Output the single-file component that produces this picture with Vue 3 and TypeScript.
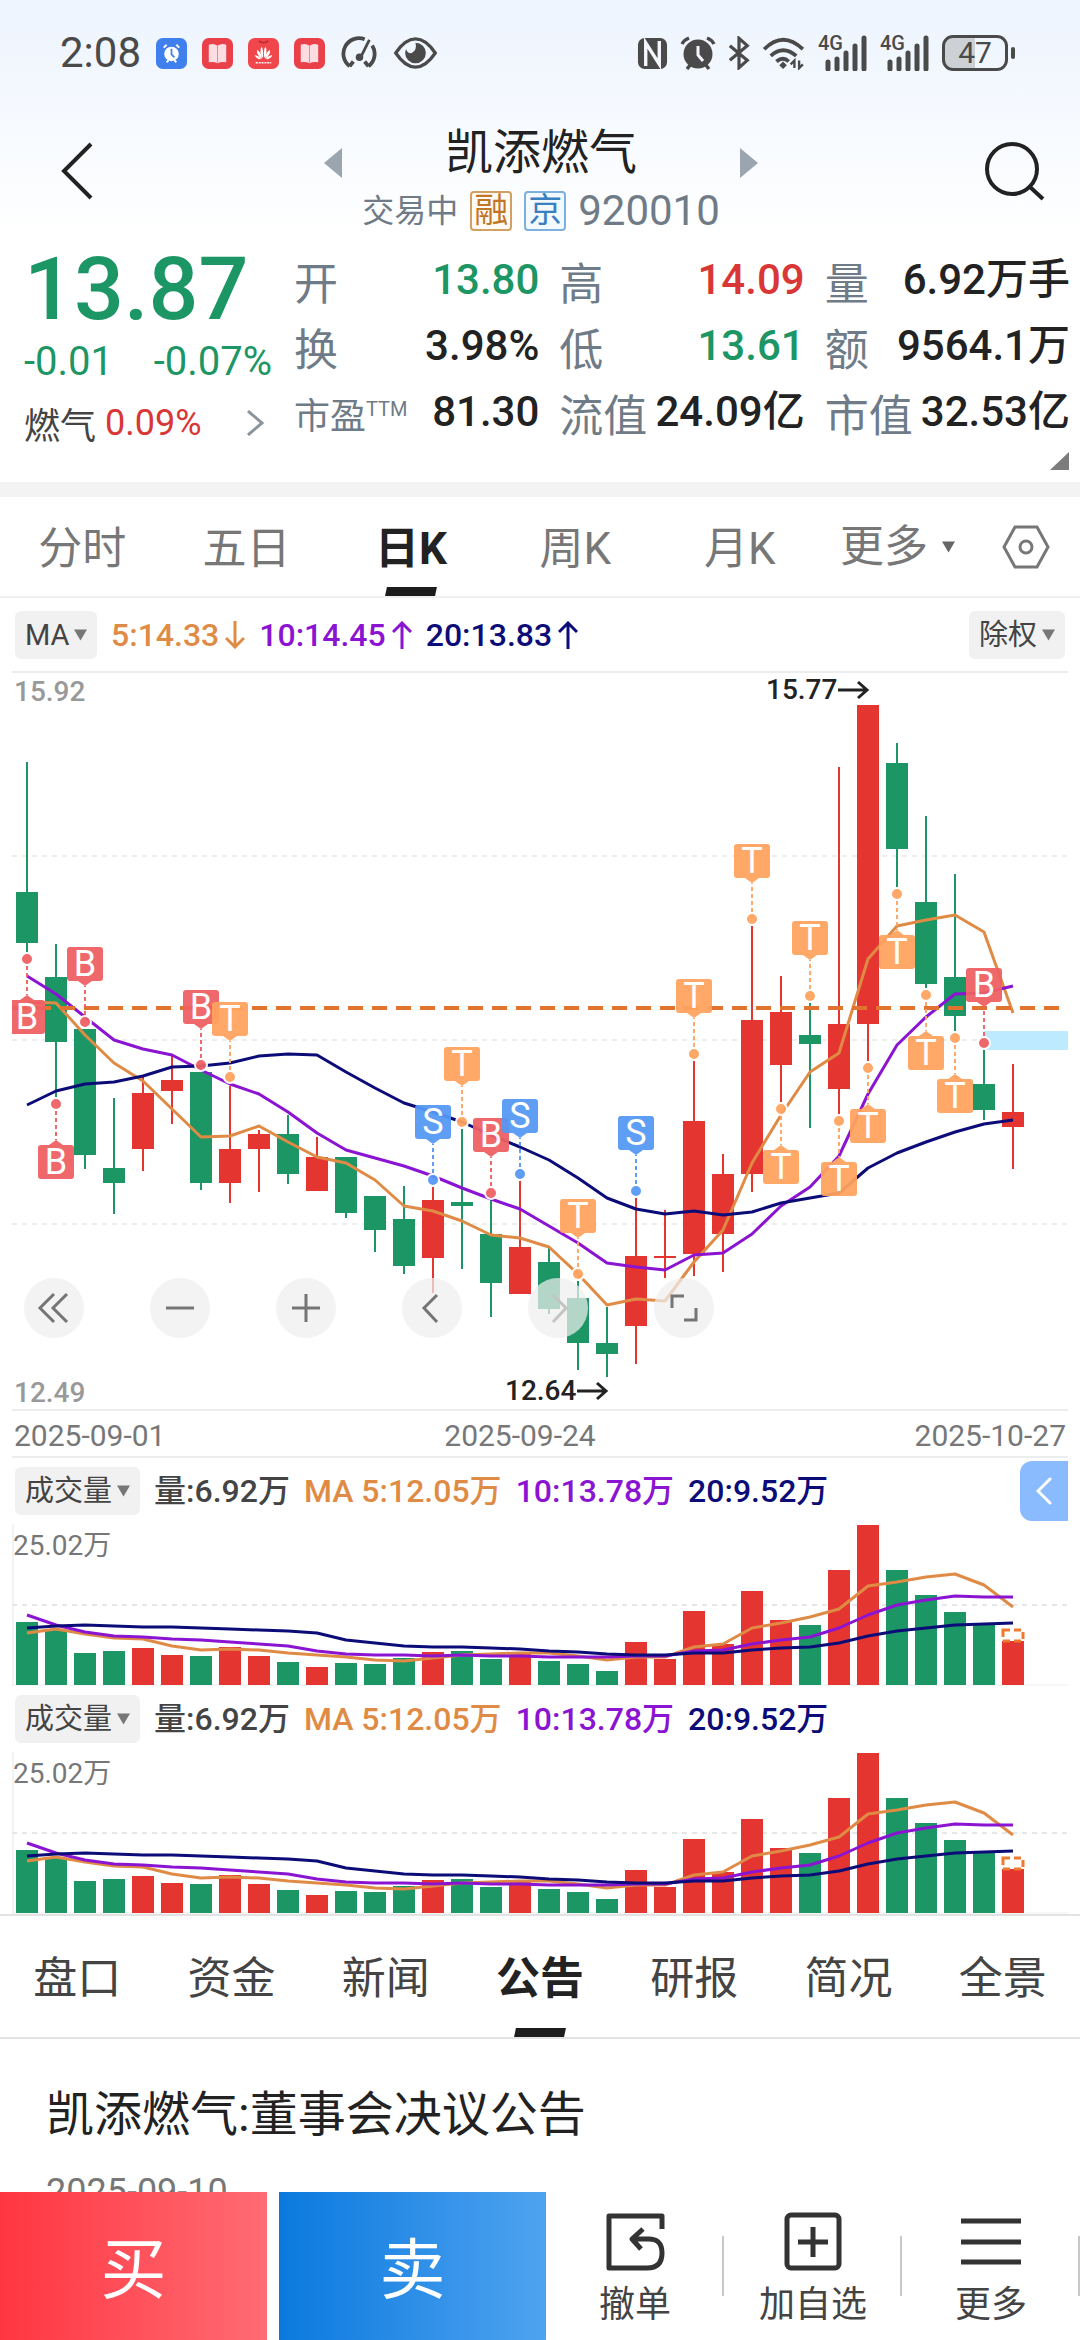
<script setup lang="ts">
import { computed, ref } from 'vue'

type Tone = 'up' | 'down' | 'plain'
type Candle = [tone: 'r' | 'g', high: number, top: number, bottom: number, low: number]
type Mark = [index: number, kind: 'B' | 'S' | 'T', side: 'above' | 'below', dot: number]

interface Stat {
  label: string
  value: string
  tone: Tone
  sup?: string
}

const stats: Stat[] = [
  { label: '开', value: '13.80', tone: 'down' },
  { label: '高', value: '14.09', tone: 'up' },
  { label: '量', value: '6.92万手', tone: 'plain' },
  { label: '换', value: '3.98%', tone: 'plain' },
  { label: '低', value: '13.61', tone: 'down' },
  { label: '额', value: '9564.1万', tone: 'plain' },
  { label: '市盈', value: '81.30', tone: 'plain', sup: 'TTM' },
  { label: '流值', value: '24.09亿', tone: 'plain' },
  { label: '市值', value: '32.53亿', tone: 'plain' },
]

const periods = ['分时', '五日', '日K', '周K', '月K']
const period = ref('日K')
const sections = ['盘口', '资金', '新闻', '公告', '研报', '简况', '全景']
const section = ref('公告')

// Candle geometry on the chart canvas, one entry per trading day.
const candles: Candle[] = [
  ['g', 762, 892, 943, 952],
  ['g', 944, 977, 1042, 1097],
  ['g', 1029, 1029, 1155, 1169],
  ['g', 1098, 1168, 1183, 1214],
  ['r', 1077, 1093, 1149, 1171],
  ['r', 1055, 1080, 1091, 1124],
  ['g', 1072, 1072, 1183, 1190],
  ['r', 1086, 1149, 1183, 1203],
  ['r', 1130, 1134, 1149, 1192],
  ['g', 1115, 1134, 1174, 1184],
  ['r', 1137, 1157, 1191, 1191],
  ['g', 1157, 1157, 1213, 1218],
  ['g', 1196, 1196, 1230, 1252],
  ['g', 1186, 1219, 1266, 1274],
  ['r', 1187, 1200, 1258, 1293],
  ['g', 1129, 1202, 1206, 1269],
  ['g', 1200, 1234, 1283, 1317],
  ['r', 1181, 1247, 1294, 1294],
  ['g', 1248, 1262, 1309, 1314],
  ['g', 1281, 1298, 1343, 1370],
  ['g', 1307, 1343, 1354, 1377],
  ['r', 1198, 1256, 1326, 1364],
  ['r', 1210, 1256, 1258, 1278],
  ['r', 1061, 1121, 1254, 1276],
  ['r', 1154, 1174, 1234, 1272],
  ['r', 926, 1020, 1174, 1192],
  ['r', 976, 1012, 1065, 1102],
  ['g', 1003, 1035, 1044, 1128],
  ['r', 767, 1024, 1089, 1114],
  ['r', 705, 705, 1024, 1061],
  ['g', 743, 763, 849, 887],
  ['g', 816, 902, 984, 988],
  ['g', 874, 977, 1016, 1031],
  ['g', 1050, 1084, 1110, 1120],
  ['r', 1064, 1112, 1127, 1169],
]

const marks: Mark[] = [
  [0, 'B', 'below', 959],
  [1, 'B', 'below', 1104],
  [2, 'B', 'above', 1022],
  [6, 'B', 'above', 1065],
  [7, 'T', 'above', 1077],
  [14, 'S', 'above', 1180],
  [15, 'T', 'above', 1122],
  [16, 'B', 'above', 1193],
  [17, 'S', 'above', 1174],
  [19, 'T', 'above', 1274],
  [21, 'S', 'above', 1191],
  [23, 'T', 'above', 1054],
  [25, 'T', 'above', 919],
  [26, 'T', 'below', 1109],
  [27, 'T', 'above', 996],
  [28, 'T', 'below', 1121],
  [29, 'T', 'below', 1068],
  [30, 'T', 'below', 894],
  [31, 'T', 'below', 995],
  [32, 'T', 'below', 1038],
  [33, 'B', 'above', 1043],
]

const priceAverages = [
  { cls: 'ma5', ys: [1002, 1003, 1035, 1063, 1081, 1109, 1137, 1136, 1126, 1142, 1157, 1163, 1180, 1206, 1211, 1221, 1235, 1238, 1247, 1274, 1305, 1299, 1301, 1262, 1230, 1163, 1115, 1072, 1053, 959, 926, 920, 915, 932, 1013] },
  { cls: 'ma10', ys: [976, 994, 1017, 1040, 1049, 1055, 1070, 1084, 1094, 1112, 1133, 1150, 1158, 1166, 1176, 1188, 1199, 1209, 1226, 1243, 1263, 1267, 1270, 1255, 1253, 1234, 1206, 1187, 1156, 1094, 1045, 1017, 994, 993, 986] },
  { cls: 'ma20', ys: [1105, 1091, 1084, 1082, 1076, 1067, 1066, 1063, 1056, 1054, 1055, 1072, 1088, 1103, 1112, 1122, 1135, 1147, 1160, 1178, 1198, 1209, 1214, 1211, 1215, 1212, 1203, 1198, 1193, 1168, 1153, 1142, 1132, 1124, 1120] },
]

const volumeTops = [1622, 1630, 1653, 1651, 1648, 1655, 1656, 1647, 1656, 1662, 1667, 1663, 1664, 1658, 1652, 1651, 1659, 1654, 1661, 1664, 1671, 1642, 1659, 1611, 1644, 1591, 1620, 1625, 1570, 1525, 1570, 1595, 1612, 1625, 1641]

const volumeAverages = [
  { cls: 'ma5', ys: [1633, 1629, 1634, 1638, 1639, 1646, 1650, 1649, 1650, 1653, 1655, 1657, 1660, 1661, 1658, 1655, 1654, 1653, 1653, 1656, 1660, 1657, 1657, 1647, 1644, 1628, 1623, 1617, 1609, 1586, 1582, 1577, 1574, 1585, 1607] },
  { cls: 'ma10', ys: [1615, 1625, 1632, 1636, 1637, 1639, 1640, 1642, 1644, 1646, 1651, 1654, 1655, 1655, 1656, 1655, 1656, 1656, 1657, 1657, 1657, 1656, 1656, 1651, 1650, 1644, 1640, 1637, 1628, 1615, 1605, 1600, 1596, 1597, 1597] },
  { cls: 'ma20', ys: [1628, 1626, 1625, 1626, 1627, 1627, 1628, 1629, 1630, 1631, 1633, 1640, 1643, 1646, 1647, 1647, 1648, 1649, 1651, 1652, 1654, 1655, 1655, 1653, 1653, 1650, 1648, 1647, 1643, 1636, 1631, 1628, 1625, 1624, 1623] },
]

const cx = (i: number): number => 27 + 29 * i
const toPoints = (ys: number[]): string => ys.map((y, i) => `${cx(i)},${y}`).join(' ')

const flags = computed(() =>
  marks.map(([i, kind, side, dot]) => {
    const x = cx(i)
    const above = side === 'above'
    const top = above ? dot - 75 : dot + 41
    const edge = above ? dot - 41 : dot + 41
    const tip = above ? dot - 36 : dot + 36
    return {
      key: `${i}${kind}`,
      kind,
      x,
      dot,
      top,
      tip,
      stem: above ? dot - 7 : dot + 7,
      pointer: `${x - 7},${edge} ${x + 7},${edge} ${x},${tip}`,
    }
  }),
)

const volumePanels = ['volume-a', 'volume-b']
</script>

<template>
  <div class="app">
    <header class="top">
      <div class="status">
        <div class="status-group">
          <span class="clock">2:08</span>
          <svg class="app-icon" viewBox="0 0 32 32">
            <rect width="32" height="32" rx="7" fill="#3f7fee" />
            <circle cx="16" cy="16.500" r="7.500" fill="#fff" />
            <path d="M8 10l3-3M24 10l-3-3M11 25l2-2M21 25l-2-2" stroke="#fff" stroke-width="2" />
            <path d="M16 11v6l3 3" stroke="#3f7fee" stroke-width="1.800" fill="none" />
          </svg>
          <svg class="app-icon" viewBox="0 0 32 32">
            <rect width="32" height="32" rx="7" fill="#e9404a" />
            <path d="M7 7q5-2 9 1q4-3 9-1v18q-5-1-9 1q-4-2-9-1z" fill="#fbdde2" />
            <path d="M16 8v18" stroke="#ee8790" stroke-width="1" />
          </svg>
          <svg class="app-icon" viewBox="0 0 32 32">
            <rect width="32" height="32" rx="7" fill="#f0474c" />
            <path d="M11 3q5 4 10 0" stroke="#b92a30" stroke-width="1.500" fill="none" />
            <path d="M15.500 21Q11 14 14 9q2 2 1.500 12M16.500 21q-.5-10 1.500-12q3 5-1.500 12M14.500 21.500Q8 17 9.500 12q5 4 5 9.500M17.500 21.500q0-5.500 5-9.500q1.500 5-5 9.500M13.500 22Q8 21.500 7 17.500q5 1 6.500 4.500M18.500 22q1.500-3.500 6.500-4.500q-1 4-6.500 4.500" fill="#fff" />
            <path d="M8 25.500h16" stroke="#fff" stroke-width="1.500" stroke-dasharray="2 1" />
          </svg>
          <svg class="app-icon" viewBox="0 0 32 32">
            <rect width="32" height="32" rx="7" fill="#e9404a" />
            <path d="M7 7q5-2 9 1q4-3 9-1v18q-5-1-9 1q-4-2-9-1z" fill="#fbdde2" />
            <path d="M16 8v18" stroke="#ee8790" stroke-width="1" />
          </svg>
          <svg class="gauge" viewBox="0 0 40 36">
            <path d="M10 32A16.500 16.500 0 0 1 26 3.500M34 10A16.500 16.500 0 0 1 30 32M10 32l4-5M30 32l-4-5" fill="none" stroke="#4a4a4a" stroke-width="4" />
            <path d="M31 4L22 22" stroke="#4a4a4a" stroke-width="3" />
            <circle cx="20.500" cy="22.500" r="4" fill="#4a4a4a" />
          </svg>
          <svg class="eye" viewBox="0 0 46 34">
            <path d="M2 17Q12 2 23 2t21 15Q34 32 23 32T2 17z" fill="none" stroke="#4a4a4a" stroke-width="3.500" />
            <path d="M23 6a11 11 0 1 1-11 11q0-2 1-4q2 5 6 4q6-3 4-11z" fill="#4a4a4a" />
          </svg>
        </div>
        <div class="status-group status-right">
          <svg class="nfc" viewBox="0 0 32 34">
            <rect x="1" y="1" width="30" height="32" rx="7" fill="#4a4a4a" />
            <path d="M9 30V6l14 22V4" fill="none" stroke="#f4f8fe" stroke-width="3.500" />
          </svg>
          <svg class="alarm" viewBox="0 0 36 36">
            <circle cx="18" cy="19" r="14.500" fill="#4a4a4a" />
            <path d="M2 9q2-4 7-6M34 9q-2-4-7-6M7 34l4-5M29 34l-4-5" stroke="#4a4a4a" stroke-width="3.500" fill="none" />
            <path d="M18 11v9l5 6" fill="none" stroke="#f4f8fe" stroke-width="3" />
          </svg>
          <svg class="bt" viewBox="0 0 24 36">
            <path d="M2 10l19 16-9 8V2l9 8L2 26" fill="none" stroke="#4a4a4a" stroke-width="3.500" />
          </svg>
          <svg class="wifi" viewBox="0 0 46 36">
            <path d="M2 14Q22-6 43 14M9 21q13-12 27 0M15 27q7-6 13 0" fill="none" stroke="#4a4a4a" stroke-width="4" />
            <path d="M22 27l4 4-4 4-4-4z" fill="#4a4a4a" />
            <path d="M34 34v-8l-4 4M39 26v8l4-4" fill="none" stroke="#4a4a4a" stroke-width="2.500" />
          </svg>
          <span v-for="n in 2" :key="n" class="signal">
            <svg viewBox="0 0 50 36">
              <path d="M10 27v7M19 24v10M28 18v16M37 11v23M46 3v31" stroke="#4a4a4a" stroke-width="5" stroke-linecap="round" />
            </svg>
            <span class="net">4G</span>
          </span>
          <span class="battery"><span class="battery-text">47</span></span>
        </div>
      </div>

      <div class="title-bar">
        <button class="icon-btn back" type="button" aria-label="返回">
          <svg viewBox="0 0 34 60"><path d="M31 3L4 30l27 27" fill="none" stroke="#222" stroke-width="4" /></svg>
        </button>
        <div class="title-group">
          <button class="icon-btn arrow" type="button" aria-label="上一只">
            <svg viewBox="0 0 18 30"><path d="M18 0v30L0 15z" fill="#9aa5af" /></svg>
          </button>
          <div class="title-text">
            <h1>凯添燃气</h1>
            <p class="sub">
              <span class="trading">交易中</span>
              <span class="badge badge-margin">融</span>
              <span class="badge badge-bj">京</span>
              <span class="code">920010</span>
            </p>
          </div>
          <button class="icon-btn arrow" type="button" aria-label="下一只">
            <svg viewBox="0 0 18 30"><path d="M0 0v30l18-15z" fill="#9aa5af" /></svg>
          </button>
        </div>
        <button class="icon-btn search" type="button" aria-label="搜索">
          <svg viewBox="0 0 62 60">
            <circle cx="28" cy="28" r="25" fill="none" stroke="#222" stroke-width="4" />
            <path d="M46 46l13 12" stroke="#222" stroke-width="4" />
          </svg>
        </button>
      </div>

      <section class="quote">
        <div class="quote-main">
          <strong class="price">13.87</strong>
          <div class="change"><span>-0.01</span><span>-0.07%</span></div>
          <a class="industry" href="#industry">
            <span>燃气</span><span class="up">0.09%</span>
            <svg viewBox="0 0 18 26"><path d="M2 1l14 12L2 25" fill="none" stroke="#8b949c" stroke-width="3" /></svg>
          </a>
        </div>
        <dl class="stats">
          <div v-for="s in stats" :key="s.label" class="stat">
            <dt :class="{ small: s.sup }">{{ s.label }}<sup v-if="s.sup">{{ s.sup }}</sup></dt>
            <dd :class="s.tone">{{ s.value }}</dd>
          </div>
        </dl>
        <span class="corner"></span>
      </section>
    </header>

    <nav class="periods">
      <button v-for="p in periods" :key="p" type="button" class="tab" :class="{ active: p === period }" @click="period = p">{{ p }}</button>
      <label class="more">
        <select aria-label="更多周期"><option>更多</option></select>
        <svg class="caret" viewBox="0 0 14 12"><path d="M0 0h14L7 12z" fill="#666" /></svg>
      </label>
      <button class="icon-btn gear" type="button" aria-label="设置">
        <svg viewBox="0 0 48 44">
          <path d="M13 2h22l11 20-11 20H13L2 22z" fill="none" stroke="#777" stroke-width="3" />
          <circle cx="24" cy="22" r="6" fill="none" stroke="#777" stroke-width="3" />
        </svg>
      </button>
    </nav>

    <main class="body">
      <div class="legend">
        <label class="pill">
          <select aria-label="主图指标"><option>MA</option></select>
          <svg class="caret" viewBox="0 0 14 12"><path d="M0 0h14L7 12z" fill="#777" /></svg>
        </label>
        <span class="val c5">5:14.33<svg viewBox="0 0 20 28"><path d="M10 0v26M1 17l9 9 9-9" /></svg></span>
        <span class="val c10">10:14.45<svg viewBox="0 0 20 28"><path d="M10 28V2M1 11l9-9 9 9" /></svg></span>
        <span class="val c20">20:13.83<svg viewBox="0 0 20 28"><path d="M10 28V2M1 11l9-9 9 9" /></svg></span>
        <label class="pill pill-end">
          <select aria-label="复权方式"><option>除权</option></select>
          <svg class="caret" viewBox="0 0 14 12"><path d="M0 0h14L7 12z" fill="#777" /></svg>
        </label>
      </div>

      <div class="kline">
        <svg class="canvas" viewBox="12 671 1056 740">
          <path d="M12 672H1068M12 1410H1068" stroke="#eceeee" stroke-width="2" />
          <path d="M12 856H1068M12 1040H1068M12 1224H1068" stroke="#eceeee" stroke-width="2" stroke-dasharray="5 5" />
          <g v-for="(c, i) in candles" :key="i" :class="c[0]">
            <rect :x="cx(i) - 1" :y="c[1]" width="2" :height="c[4] - c[1]" />
            <rect :x="cx(i) - 11" :y="c[2]" width="22" :height="c[3] - c[2]" />
          </g>
          <rect x="984" y="1031" width="84" height="19" fill="#bdeaff" />
          <polyline v-for="m in priceAverages" :key="m.cls" :class="m.cls" :points="toPoints(m.ys)" />
          <path d="M12 1008H1060" stroke="#e0732f" stroke-width="4" stroke-dasharray="15 9" />
          <g v-for="f in flags" :key="f.key" :class="['flag', `flag-${f.kind}`]">
            <path :d="`M${f.x} ${f.stem}V${f.tip}`" stroke-width="2" stroke-dasharray="4 3" />
            <rect :x="f.x - 18" :y="f.top" width="36" height="34" rx="3" />
            <polygon :points="f.pointer" />
            <circle :cx="f.x" :cy="f.dot" r="6" stroke="#fff" stroke-width="2" />
            <text :x="f.x" :y="f.top + 29" text-anchor="middle">{{ f.kind }}</text>
          </g>
          <text class="axis" x="14" y="701">15.92</text>
          <text class="axis" x="14" y="1402">12.49</text>
          <text class="extreme" x="766" y="699">15.77</text>
          <path class="pointer" d="M838 690h28M858 682l9 8-9 8" />
          <text class="extreme" x="505" y="1400">12.64</text>
          <path class="pointer" d="M577 1391h28M597 1383l9 8-9 8" />
        </svg>
        <div class="controls">
          <button type="button" aria-label="最左"><svg viewBox="0 0 60 60"><path d="M30 16L16 30l14 14M43 16L29 30l14 14" /></svg></button>
          <button type="button" aria-label="缩小"><svg viewBox="0 0 60 60"><path d="M16 30h28" /></svg></button>
          <button type="button" aria-label="放大"><svg viewBox="0 0 60 60"><path d="M16 30h28M30 16v28" /></svg></button>
          <button type="button" aria-label="左移"><svg viewBox="0 0 60 60"><path d="M35 17L22 30l13 14" /></svg></button>
          <button type="button" aria-label="右移" disabled><svg viewBox="0 0 60 60"><path d="M25 17l13 13-13 14" /></svg></button>
          <button type="button" aria-label="全屏"><svg viewBox="0 0 60 60"><path d="M18 30V18h12M42 30v12H30" /></svg></button>
        </div>
      </div>

      <div class="dates"><span>2025-09-01</span><span class="mid">2025-09-24</span><span>2025-10-27</span></div>

      <section v-for="(id, n) in volumePanels" :key="id" class="volume">
        <div class="legend volume-legend">
          <label class="pill">
            <select :id="id" aria-label="副图指标"><option>成交量</option></select>
            <svg class="caret" viewBox="0 0 14 12"><path d="M0 0h14L7 12z" fill="#777" /></svg>
          </label>
          <span class="val">量:6.92万</span>
          <span class="val c5">MA 5:12.05万</span>
          <span class="val c10">10:13.78万</span>
          <span class="val c20">20:9.52万</span>
        </div>
        <svg class="canvas" viewBox="12 1524 1056 162">
          <path d="M13 1524V1686" stroke="#e4e6e6" stroke-width="1" />
          <path d="M12 1685H1068" stroke="#eceeee" stroke-width="1" />
          <path d="M12 1605H1068" stroke="#e6e6e6" stroke-width="2" stroke-dasharray="5 5" />
          <rect v-for="(y, i) in volumeTops" :key="i" :class="candles[i][0]" :x="cx(i) - 11" :y="y" width="22" :height="1685 - y" />
          <rect x="1003" y="1630" width="20" height="11" fill="#fff" stroke="#ee7a30" stroke-width="3" stroke-dasharray="7 4" />
          <polyline v-for="m in volumeAverages" :key="m.cls" :class="m.cls" :points="toPoints(m.ys)" />
          <text class="axis-light" x="13" y="1555">25.02万</text>
        </svg>
        <button v-if="n === 0" class="drawer" type="button" aria-label="展开">
          <svg viewBox="0 0 16 28"><path d="M14 2L2 14l12 12" fill="none" stroke="#fff" stroke-width="3" stroke-linecap="round" /></svg>
        </button>
      </section>

      <nav class="sections">
        <button v-for="s in sections" :key="s" type="button" class="tab" :class="{ active: s === section }" @click="section = s">{{ s }}</button>
      </nav>

      <article class="news">
        <a href="#notice">凯添燃气:董事会决议公告</a>
        <time datetime="2025-09-10">2025-09-10</time>
      </article>
    </main>

    <footer class="trade">
      <button class="buy" type="button">买</button>
      <button class="sell" type="button">卖</button>
      <div class="actions">
        <button type="button">
          <svg viewBox="0 0 60 60">
            <path d="M57 17V4H4v52h38q15 0 15-15t-15-14H27M38 17L27 27l9 10" fill="none" stroke="#333" stroke-width="5" stroke-linejoin="round" />
          </svg>
          <span>撤单</span>
        </button>
        <button type="button">
          <svg viewBox="0 0 60 60">
            <rect x="4" y="3" width="52" height="53" rx="4" fill="none" stroke="#333" stroke-width="5" />
            <path d="M30 15v30M15 30h30" stroke="#333" stroke-width="5" />
          </svg>
          <span>加自选</span>
        </button>
        <button type="button">
          <svg viewBox="0 0 60 60"><path d="M0 9h60M0 30h60M0 50h60" stroke="#333" stroke-width="5" /></svg>
          <span>更多</span>
        </button>
      </div>
    </footer>
  </div>
</template>

<style>
body {
  margin: 0;
  background: #fff;
}
</style>

<style scoped>
.app {
  display: flex;
  flex-direction: column;
  height: 100vh;
  overflow: hidden;
  background: #fff;
  color: #222;
  font-family: Roboto, "Noto Sans CJK SC", sans-serif;
}
h1, p, dl, dd {
  margin: 0;
}
button, select {
  margin: 0;
  padding: 0;
  border: 0;
  background: none;
  color: inherit;
  font: inherit;
  appearance: none;
}
svg {
  display: block;
  flex: none;
}
.top {
  flex: none;
  background: linear-gradient(#edf4fe, #fff 236px);
  border-bottom: 15px solid #f3f3f3;
}
.status {
  display: flex;
  justify-content: space-between;
  align-items: center;
  height: 106px;
  padding: 0 72px 0 60px;
  color: #4a4a4a;
}
.status-group {
  display: flex;
  align-items: center;
  gap: 15px;
}
.status-right {
  gap: 12px;
}
.clock {
  font-size: 42px;
  line-height: 48px;
}
.app-icon {
  width: 31px;
  height: 31px;
}
.gauge {
  width: 38px;
  height: 34px;
}
.eye {
  width: 45px;
  height: 32px;
}
.nfc {
  width: 31px;
  height: 33px;
}
.alarm {
  width: 36px;
  height: 36px;
}
.bt {
  width: 22px;
  height: 34px;
}
.wifi {
  width: 44px;
  height: 34px;
}
.signal {
  position: relative;
}
.signal svg {
  width: 50px;
  height: 36px;
}
.net {
  position: absolute;
  left: 0;
  top: -4px;
  font-size: 20px;
  font-weight: 500;
  line-height: 24px;
}
.battery {
  position: relative;
  box-sizing: border-box;
  width: 66px;
  height: 36px;
  border: 3px solid #4a4a4a;
  border-radius: 11px;
  background: linear-gradient(90deg, #cdd1d6 50%, transparent 50%);
  text-align: center;
}
.battery::after {
  content: "";
  position: absolute;
  right: -10px;
  top: 9px;
  width: 4px;
  height: 12px;
  border-radius: 2px;
  background: #4a4a4a;
}
.battery-text {
  display: block;
  font-size: 30px;
  line-height: 30px;
}
.title-bar {
  display: grid;
  grid-template-columns: 1fr auto 1fr;
  align-items: center;
  height: 130px;
  padding: 0 34px 0 60px;
}
.icon-btn {
  cursor: pointer;
}
.back {
  justify-self: start;
}
.back svg {
  width: 34px;
  height: 60px;
}
.search {
  justify-self: end;
}
.search svg {
  width: 62px;
  height: 60px;
}
.title-group {
  display: flex;
  align-items: flex-start;
  gap: 20px;
  margin-right: 24px;
}
.arrow svg {
  width: 18px;
  height: 30px;
  margin-top: 37px;
}
.title-text {
  padding-top: 12px;
  text-align: center;
}
h1 {
  font-size: 48px;
  font-weight: 400;
  line-height: 60px;
}
.sub {
  display: flex;
  align-items: center;
  gap: 12px;
  margin-top: 8px;
  color: #6f7b87;
}
.trading {
  font-size: 32px;
  line-height: 40px;
}
.badge {
  box-sizing: border-box;
  width: 42px;
  height: 40px;
  border: 2px solid;
  border-radius: 4px;
  font-size: 34px;
  line-height: 34px;
}
.badge-margin {
  border-color: #d3a063;
  background: #fffaf3;
  color: #c27526;
}
.badge-bj {
  border-color: #7db0dc;
  background: #f2f9ff;
  color: #3a80bf;
}
.code {
  font-size: 42px;
  line-height: 40px;
}
.quote {
  position: relative;
  display: flex;
  height: 246px;
}
.quote-main {
  flex: none;
  box-sizing: border-box;
  width: 294px;
  padding: 5px 22px 0 24px;
}
.price {
  display: block;
  color: #1c9664;
  font-size: 88px;
  font-weight: 500;
  line-height: 96px;
}
.change {
  display: flex;
  justify-content: space-between;
  color: #1c9664;
  font-size: 40px;
  line-height: 50px;
}
.industry {
  display: flex;
  align-items: center;
  gap: 9px;
  height: 72px;
  padding-right: 8px;
  color: #444;
  font-size: 36px;
  text-decoration: none;
}
.industry svg {
  width: 18px;
  height: 26px;
  margin-left: auto;
}
.stats {
  flex: 1;
  display: grid;
  grid-template-columns: repeat(3, 1fr);
  grid-auto-rows: 66px;
  column-gap: 20px;
  padding: 12px 10px 0 0;
}
.stat {
  display: flex;
  justify-content: space-between;
  align-items: center;
  white-space: nowrap;
}
dt {
  color: #6f7b87;
  font-size: 44px;
}
dt.small {
  font-size: 36px;
}
sup {
  font-size: 20px;
  line-height: 20px;
}
dd {
  padding-bottom: 3px;
  font-size: 42px;
  font-weight: 500;
  line-height: 50px;
}
.up {
  color: #d93636;
}
.down {
  color: #1c9664;
}
.corner {
  position: absolute;
  right: 11px;
  bottom: 12px;
  border-left: 19px solid transparent;
  border-bottom: 18px solid #7c7c7c;
}
.periods {
  flex: none;
  display: flex;
  height: 99px;
  border-bottom: 2px solid #f0f0f0;
  color: #777;
  font-size: 44px;
}
.tab {
  position: relative;
  flex: 1;
  padding-bottom: 4px;
  cursor: pointer;
}
.tab.active {
  color: #222;
  font-weight: 700;
}
.tab.active::after {
  content: "";
  position: absolute;
  left: 50%;
  bottom: 0;
  width: 50px;
  height: 9px;
  margin-left: -25px;
  background: #1c1c1c;
  transform: skewX(-12deg);
}
.more {
  display: flex;
  align-items: center;
  gap: 14px;
  margin-left: 18px;
}
.caret {
  width: 13px;
  height: 12px;
}
.gear {
  margin: 0 30px 0 47px;
}
.gear svg {
  width: 48px;
  height: 44px;
}
.body {
  flex: 1;
  min-height: 0;
  overflow: hidden;
}
.legend {
  display: flex;
  align-items: center;
  gap: 14px;
  height: 73px;
  padding: 0 15px;
}
.pill {
  display: flex;
  align-items: center;
  gap: 4px;
  box-sizing: border-box;
  height: 48px;
  padding: 0 10px;
  border-radius: 6px;
  background: #f1f1f1;
  color: #444;
  font-size: 29px;
}
.pill-end {
  margin-left: auto;
}
.val {
  display: flex;
  align-items: center;
  gap: 6px;
  color: #444;
  font-size: 32px;
  font-weight: 500;
  line-height: 40px;
}
.val svg {
  width: 20px;
  height: 28px;
  fill: none;
  stroke: currentColor;
  stroke-width: 3px;
}
.c5 {
  color: #e08b45;
}
.c10 {
  color: #8a14d2;
}
.c20 {
  color: #0c0c78;
}
.kline {
  position: relative;
}
.canvas {
  width: calc(100% - 24px);
  margin: 0 12px;
}
.r {
  fill: #e53531;
}
.g {
  fill: #1c9664;
}
polyline {
  fill: none;
  stroke-width: 3px;
  stroke-linejoin: round;
}
.ma5 {
  stroke: #e08b45;
}
.ma10 {
  stroke: #8a14d2;
}
.ma20 {
  stroke: #0c0c78;
}
.flag {
  opacity: 0.94;
}
.flag-B {
  fill: #ef6063;
}
.flag-T {
  fill: #ffa35f;
}
.flag-S {
  fill: #5598f5;
}
.flag-B path {
  stroke: #ef6063;
}
.flag-T path {
  stroke: #ffa35f;
}
.flag-S path {
  stroke: #5598f5;
}
.flag text {
  fill: #fff;
  font-size: 36px;
}
.axis {
  fill: #999;
  font-size: 28px;
  font-weight: 500;
}
.axis-light {
  fill: #777;
  font-size: 28px;
}
.extreme {
  fill: #222;
  font-size: 28px;
  font-weight: 500;
}
.pointer {
  fill: none;
  stroke: #222;
  stroke-width: 3px;
}
.controls {
  position: absolute;
  left: 24px;
  bottom: 73px;
  display: flex;
  gap: 66px;
}
.controls button {
  width: 60px;
  height: 60px;
  border-radius: 50%;
  background: rgba(238, 238, 238, 0.72);
}
.controls svg {
  width: 60px;
  height: 60px;
  fill: none;
  stroke: #757575;
  stroke-width: 3px;
}
.controls button:disabled svg {
  stroke: #c4c4c4;
}
.dates {
  display: flex;
  justify-content: space-between;
  margin: 0 12px;
  padding: 4px 2px 0;
  border-bottom: 2px solid #eceeee;
  color: #777;
  font-size: 30px;
  line-height: 41px;
}
.mid {
  margin-right: 40px;
}
.volume {
  position: relative;
}
.volume-legend {
  height: 66px;
}
.drawer {
  position: absolute;
  top: 3px;
  right: 12px;
  width: 48px;
  height: 60px;
  border-radius: 12px 0 0 12px;
  background: #8abbff;
}
.drawer svg {
  width: 16px;
  height: 28px;
  margin: 0 auto;
}
.sections {
  display: flex;
  height: 121px;
  border-top: 2px solid #e3e3e3;
  border-bottom: 2px solid #e3e3e3;
  color: #444;
  font-size: 44px;
}
.news {
  padding: 46px 46px 0;
}
.news a {
  display: block;
  color: #222;
  font-size: 48px;
  line-height: 60px;
  text-decoration: none;
}
.news time {
  display: block;
  margin-top: 23px;
  color: #777;
  font-size: 36px;
  line-height: 48px;
}
.trade {
  flex: none;
  display: flex;
  gap: 12px;
  height: 148px;
  background: #fff;
}
.buy, .sell {
  flex: 1;
  padding-bottom: 5px;
  color: #fff;
  font-size: 66px;
}
.buy {
  background: linear-gradient(90deg, #ff3641, #ff6b74);
}
.sell {
  background: linear-gradient(90deg, #0a79de, #4fa3f0);
}
.actions {
  flex: 2;
  display: flex;
  margin-left: -12px;
}
.actions button {
  position: relative;
  flex: 1;
  display: flex;
  flex-direction: column;
  align-items: center;
  padding-top: 20px;
  color: #444;
  font-size: 36px;
  line-height: 48px;
}
.actions button::after {
  content: "";
  position: absolute;
  right: 0;
  top: 44px;
  width: 2px;
  height: 60px;
  background: #c8c8c8;
}
.actions svg {
  width: 60px;
  height: 60px;
  margin-bottom: 9px;
}
</style>
